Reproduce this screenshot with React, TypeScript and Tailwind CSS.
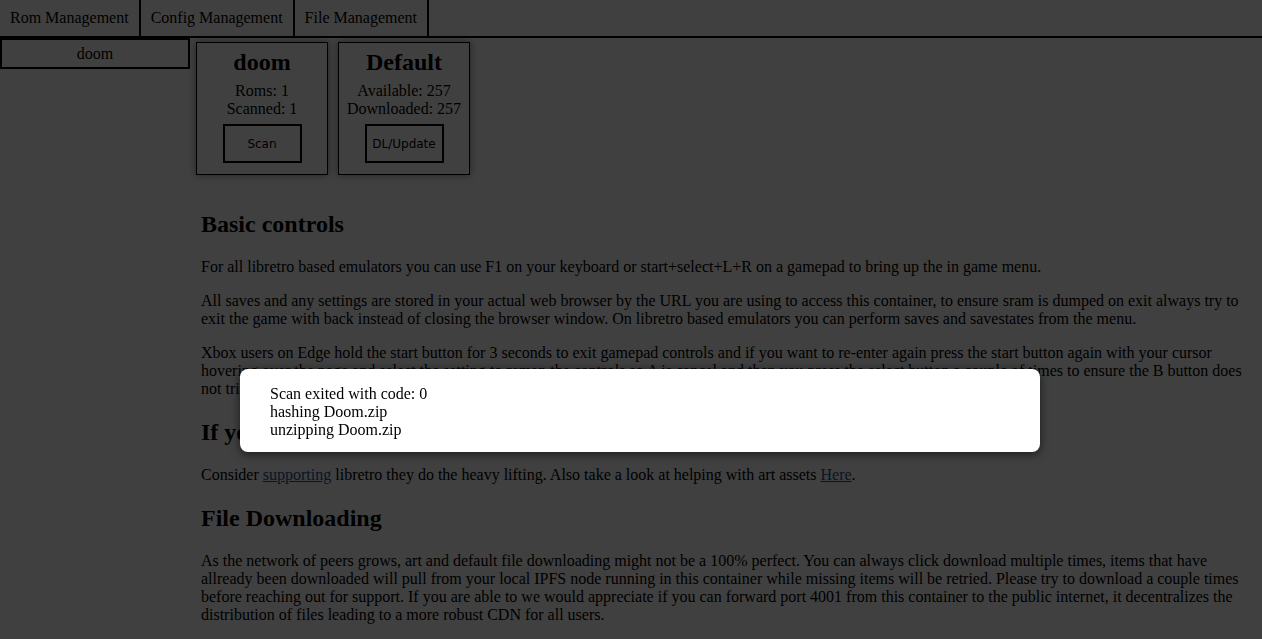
import React from "react"

const TABS = ["Rom Management", "Config Management", "File Management"]

const SERIF = "font-['Liberation_Serif','Times_New_Roman',serif]"

function Card({ title, lines, action }: { title: string; lines: string[]; action: string }) {
  return (
    <div className="w-[132px] border border-black px-2 pt-[5px] pb-[11px] flex flex-col items-center shadow-[0_0_8px_rgba(0,0,0,0.45)]">
      <h2 className="text-[24px] font-bold leading-[28px]">{title}</h2>
      <div className="mt-[6px] text-center leading-[18px] whitespace-nowrap">
        {lines.map(l => <div key={l}>{l}</div>)}
      </div>
      <button className="mt-[6px] w-[79px] h-[39px] border-2 border-black bg-transparent text-[12px] font-['DejaVu_Sans',sans-serif]">
        {action}
      </button>
    </div>
  )
}

export default function App() {
  return (
    <div className={`${SERIF} relative min-h-[639px] bg-white text-black text-[16px] leading-[18px] overflow-hidden`}>
      {/* Top tabs */}
      <div className="flex border-b-2 border-black h-[38px]">
        {TABS.map(t => (
          <button key={t} className="px-[10px] h-[36px] pb-[1px] border-r-2 border-black bg-transparent text-[16px]">
            {t}
          </button>
        ))}
      </div>

      <div className="flex">
        {/* Sidebar */}
        <div className="w-[190px] shrink-0">
          <div className="border-2 border-black text-center py-[4.5px]">doom</div>
        </div>

        {/* Main */}
        <div className="flex-1 pb-10">
          <div className="flex gap-[10px] ml-[6px] mt-[4px]">
            <Card title="doom" lines={["Roms: 1", "Scanned: 1"]} action="Scan" />
            <Card title="Default" lines={["Available: 257", "Downloaded: 257"]} action="DL/Update" />
          </div>

          <div className="pl-[11px] pr-[12px] pt-[15px]">
            <h2 className="text-[24px] font-bold leading-[28px] my-[20px]">Basic controls</h2>
            <p className="my-[16px]">
              For all libretro based emulators you can use F1 on your keyboard or start+select+L+R on a gamepad to bring up the in game menu.
            </p>
            <p className="my-[16px]">
              All saves and any settings are stored in your actual web browser by the URL you are using to access this container, to ensure sram is dumped on exit always try to exit the game with back instead of closing the browser window. On libretro based emulators you can perform saves and savestates from the menu.
            </p>
            <p className="my-[16px]">
              Xbox users on Edge hold the start button for 3 seconds to exit gamepad controls and if you want to re-enter again press the start button again with your cursor hovering over the page and select the setting to remap the controls so A is cancel and then you press the select button a couple of times to ensure the B button does not trigger a back navigation in the browser.
            </p>
            <h2 className="text-[24px] font-bold leading-[28px] my-[20px]">If you enjoy this project</h2>
            <p className="my-[16px]">
              Consider <a href="#" className="underline text-[#1d55a0]">supporting</a> libretro they do the heavy lifting. Also take a look at helping with art assets <a href="#" className="underline text-[#1d55a0]">Here</a>.
            </p>
            <h2 className="text-[24px] font-bold leading-[28px] my-[20px]">File Downloading</h2>
            <p className="my-[16px]">
              As the network of peers grows, art and default file downloading might not be a 100% perfect. You can always click download multiple times, items that have allready been downloaded will pull from your local IPFS node running in this container while missing items will be retried. Please try to download a couple times before reaching out for support. If you are able to we would appreciate if you can forward port 4001 from this container to the public internet, it decentralizes the distribution of files leading to a more robust CDN for all users.
            </p>
          </div>
        </div>
      </div>

      {/* Modal overlay */}
      <div className="fixed inset-0 bg-black/75" />
      <div className="fixed left-[240px] top-[369px] w-[800px] h-[83px] bg-white rounded-lg pl-[30px] pt-[16px] shadow-[0_2px_10px_rgba(0,0,0,0.6)]">
        <div>Scan exited with code: 0</div>
        <div>hashing Doom.zip</div>
        <div>unzipping Doom.zip</div>
      </div>
    </div>
  )
}
